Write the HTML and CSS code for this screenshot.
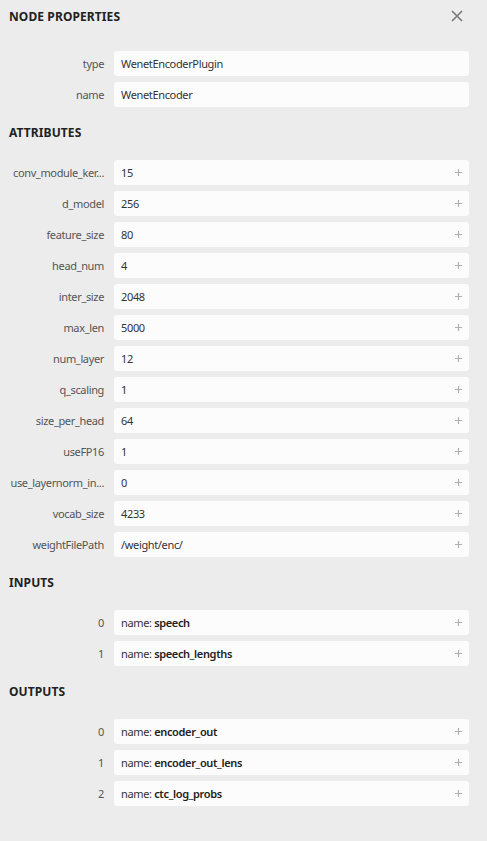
FILE: index.html
```html
<!DOCTYPE html>
<html>
<head>
<meta charset="utf-8">
<link rel="stylesheet" href="styles.css">
</head>
<body>
<div class="sidebar">
  <div class="header">
    <span class="title">NODE PROPERTIES</span>
    <svg class="close" width="12" height="12" viewBox="0 0 12 12"><path d="M1 1 L11 11 M11 1 L1 11" stroke="#777" stroke-width="1.6" fill="none"/></svg>
  </div>
  <div class="section top">
    <div class="row"><div class="label">type</div><div class="value">WenetEncoderPlugin</div></div>
    <div class="row"><div class="label">name</div><div class="value">WenetEncoder</div></div>
  </div>
  <div class="heading">ATTRIBUTES</div>
  <div class="section">
    <div class="row"><div class="label">conv_module_ker...</div><div class="value">15<svg class="plus" viewBox="0 0 7 7"><path d="M3.5 0 V7 M0 3.5 H7"/></svg></div></div>
    <div class="row"><div class="label">d_model</div><div class="value">256<svg class="plus" viewBox="0 0 7 7"><path d="M3.5 0 V7 M0 3.5 H7"/></svg></div></div>
    <div class="row"><div class="label">feature_size</div><div class="value">80<svg class="plus" viewBox="0 0 7 7"><path d="M3.5 0 V7 M0 3.5 H7"/></svg></div></div>
    <div class="row"><div class="label">head_num</div><div class="value">4<svg class="plus" viewBox="0 0 7 7"><path d="M3.5 0 V7 M0 3.5 H7"/></svg></div></div>
    <div class="row"><div class="label">inter_size</div><div class="value">2048<svg class="plus" viewBox="0 0 7 7"><path d="M3.5 0 V7 M0 3.5 H7"/></svg></div></div>
    <div class="row"><div class="label">max_len</div><div class="value">5000<svg class="plus" viewBox="0 0 7 7"><path d="M3.5 0 V7 M0 3.5 H7"/></svg></div></div>
    <div class="row"><div class="label">num_layer</div><div class="value">12<svg class="plus" viewBox="0 0 7 7"><path d="M3.5 0 V7 M0 3.5 H7"/></svg></div></div>
    <div class="row"><div class="label">q_scaling</div><div class="value">1<svg class="plus" viewBox="0 0 7 7"><path d="M3.5 0 V7 M0 3.5 H7"/></svg></div></div>
    <div class="row"><div class="label">size_per_head</div><div class="value">64<svg class="plus" viewBox="0 0 7 7"><path d="M3.5 0 V7 M0 3.5 H7"/></svg></div></div>
    <div class="row"><div class="label">useFP16</div><div class="value">1<svg class="plus" viewBox="0 0 7 7"><path d="M3.5 0 V7 M0 3.5 H7"/></svg></div></div>
    <div class="row"><div class="label">use_layernorm_in...</div><div class="value">0<svg class="plus" viewBox="0 0 7 7"><path d="M3.5 0 V7 M0 3.5 H7"/></svg></div></div>
    <div class="row"><div class="label">vocab_size</div><div class="value">4233<svg class="plus" viewBox="0 0 7 7"><path d="M3.5 0 V7 M0 3.5 H7"/></svg></div></div>
    <div class="row"><div class="label">weightFilePath</div><div class="value">/weight/enc/<svg class="plus" viewBox="0 0 7 7"><path d="M3.5 0 V7 M0 3.5 H7"/></svg></div></div>
  </div>
  <div class="heading">INPUTS</div>
  <div class="section">
    <div class="row"><div class="label">0</div><div class="value">name: <b>speech</b><svg class="plus" viewBox="0 0 7 7"><path d="M3.5 0 V7 M0 3.5 H7"/></svg></div></div>
    <div class="row"><div class="label">1</div><div class="value">name: <b>speech_lengths</b><svg class="plus" viewBox="0 0 7 7"><path d="M3.5 0 V7 M0 3.5 H7"/></svg></div></div>
  </div>
  <div class="heading">OUTPUTS</div>
  <div class="section">
    <div class="row"><div class="label">0</div><div class="value">name: <b>encoder_out</b><svg class="plus" viewBox="0 0 7 7"><path d="M3.5 0 V7 M0 3.5 H7"/></svg></div></div>
    <div class="row"><div class="label">1</div><div class="value">name: <b>encoder_out_lens</b><svg class="plus" viewBox="0 0 7 7"><path d="M3.5 0 V7 M0 3.5 H7"/></svg></div></div>
    <div class="row"><div class="label">2</div><div class="value">name: <b>ctc_log_probs</b><svg class="plus" viewBox="0 0 7 7"><path d="M3.5 0 V7 M0 3.5 H7"/></svg></div></div>
  </div>
</div>
</body>
</html>
```
FILE: styles.css
```css
html, body {
  margin: 0;
  padding: 0;
  background: #ececec;
  height: 100%;
}
.sidebar {
  font-family: "Noto Sans", "Open Sans", sans-serif;
  font-size: 11px;
  letter-spacing: -0.35px;
  color: #333;
  background: #ececec;
  min-height: 841px;
}
.header {
  display: flex;
  justify-content: space-between;
  align-items: center;
  height: 32px;
  padding: 0 24px 0 9px;
}
.title, .heading {
  font-weight: 700;
  font-size: 12px;
  color: #222;
  letter-spacing: 0.1px;
}
.close {
  display: block;
}
.section {
  display: flex;
  flex-direction: column;
  gap: 6px;
}
.section.top {
  margin-top: 19px;
}
.heading {
  padding: 0 9px;
  margin-top: 18px;
  margin-bottom: 19px;
  line-height: 16px;
}
.row {
  display: grid;
  grid-template-columns: 95px 1fr;
  column-gap: 10px;
  padding: 0 18px 0 9px;
  align-items: center;
}
.label {
  text-align: right;
  color: #555;
  white-space: nowrap;
}
.value {
  position: relative;
  height: 25px;
  line-height: 25px;
  background: #fcfcfc;
  border-radius: 3px;
  padding: 0 20px 0 7px;
  color: #333;
  white-space: nowrap;
}
.value b {
  font-weight: 600;
  color: #222;
}
.plus {
  position: absolute;
  right: 7px;
  top: 9px;
  width: 7px;
  height: 7px;
  stroke: #b0b0b0;
  stroke-width: 1.2;
  fill: none;
}
```
